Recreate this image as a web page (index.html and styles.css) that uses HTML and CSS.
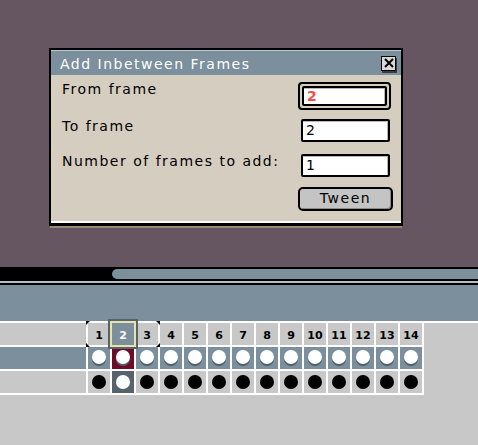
FILE: index.html
```html
<!DOCTYPE html>
<html>
<head>
<meta charset="utf-8">
<link rel="stylesheet" href="styles.css">
</head>
<body>
<div class="desk">
  <div class="win">
    <div class="titlebar">
      <span class="title">Add Inbetween Frames</span>
      <span class="close"><svg width="12" height="12" viewBox="0 0 12 12"><path d="M2 2L10 10M10 2L2 10" stroke="#000" stroke-width="2" fill="none"/></svg></span>
    </div>
    <div class="body">
      <div class="row r1"><span class="lbl">From frame</span><span class="focus"><span class="field"><span class="sel">2</span></span></span></div>
      <div class="row r2"><span class="lbl">To frame</span><span class="field">2</span></div>
      <div class="row r3"><span class="lbl">Number of frames to add:</span><span class="field">1</span></div>
      <div class="btnrow"><span class="btn">Tween</span></div>
    </div>
  </div>
</div>
<div class="scroll"><div class="thumb"></div></div>
<div class="sep"></div>
<div class="toolbar"></div>
<div class="tl">
  <div class="grid">
    <div class="hd lab"></div>
    <div class="hd c"><span class="mk tl-mk"></span><span class="mk bl-mk"></span>1</div>
    <div class="hd c cur">2</div>
    <div class="hd c"><span class="mk tr-mk"></span><span class="mk br-mk"></span>3</div>
    <div class="hd c">4</div><div class="hd c">5</div><div class="hd c">6</div><div class="hd c">7</div>
    <div class="hd c">8</div><div class="hd c">9</div><div class="hd c">10</div><div class="hd c">11</div>
    <div class="hd c">12</div><div class="hd c">13</div><div class="hd c">14</div>

    <div class="ra lab"></div>
    <div class="ra c"><i class="dw"></i></div>
    <div class="ra c sel-a"><i class="dw"></i></div>
    <div class="ra c"><i class="dw"></i></div><div class="ra c"><i class="dw"></i></div>
    <div class="ra c"><i class="dw"></i></div><div class="ra c"><i class="dw"></i></div>
    <div class="ra c"><i class="dw"></i></div><div class="ra c"><i class="dw"></i></div>
    <div class="ra c"><i class="dw"></i></div><div class="ra c"><i class="dw"></i></div>
    <div class="ra c"><i class="dw"></i></div><div class="ra c"><i class="dw"></i></div>
    <div class="ra c"><i class="dw"></i></div><div class="ra c"><i class="dw"></i></div>

    <div class="rb lab"></div>
    <div class="rb c"><i class="db"></i></div>
    <div class="rb c sel-b"><i class="dw2"></i></div>
    <div class="rb c"><i class="db"></i></div><div class="rb c"><i class="db"></i></div>
    <div class="rb c"><i class="db"></i></div><div class="rb c"><i class="db"></i></div>
    <div class="rb c"><i class="db"></i></div><div class="rb c"><i class="db"></i></div>
    <div class="rb c"><i class="db"></i></div><div class="rb c"><i class="db"></i></div>
    <div class="rb c"><i class="db"></i></div><div class="rb c"><i class="db"></i></div>
    <div class="rb c"><i class="db"></i></div><div class="rb c"><i class="db"></i></div>
  </div>
</div>
</body>
</html>
```
FILE: styles.css
```css
html, body { margin: 0; padding: 0; }
body { width: 478px; height: 445px; overflow: hidden; background: #c8c8c8;
  font-family: "DejaVu Sans", sans-serif; }

.desk { height: 267px; background: #665662; box-sizing: border-box; padding: 48px 0 0 49px; }

.win { width: 354px; height: 178px; box-sizing: border-box; border: 2px solid #000;
  border-bottom-width: 3px;
  background: #d4cdc0; display: flex; flex-direction: column;
  box-shadow: 0 3px 0 -1px #9c8878; }

.titlebar { height: 25px; box-sizing: border-box; background: #7b8f9c;
  border-top: 1px solid #b9cad6; display: flex; align-items: center;
  justify-content: space-between; padding: 0 5px 0 9px; }
.title { color: #fff; font-size: 14px; letter-spacing: 1.5px; line-height: 16px; margin-top: 1px; }
.close { width: 15px; height: 15px; box-sizing: border-box; border: 1px solid #000;
  background: #d8d8d8; display: flex; align-items: center; justify-content: center;
  box-shadow: 1px 2px 0 #3c3c3c; }

.body { flex: 1; padding: 7px 11px 0 11px; border-bottom: 2px solid #fff; }
.row { display: flex; justify-content: space-between; align-items: flex-start; }
.lbl { font-size: 14px; letter-spacing: 1.5px; line-height: 16px; color: #000; margin-top: -1px; }
.r1 { height: 28px; }
.r2 { margin-top: 9px; }
.r3 { margin-top: 12px; }

.focus { display: flex; width: 93px; height: 28px; box-sizing: border-box; border: 2px solid #000;
  border-radius: 4px; padding: 2px; margin-right: -1px; }
.focus .field { width: 85px; height: 20px; line-height: 16px; }
.field { display: block; width: 89px; height: 23px; box-sizing: border-box; border: 2px solid #000;
  border-radius: 2px; background: #fff; font-size: 14px; line-height: 18px;
  padding-left: 3px; box-shadow: inset 0 1px 0 #b8b8b8, inset -1px 0 0 #b8b8b8; }
.sel { color: #f04a4a; font-weight: bold; }

.btnrow { display: flex; justify-content: flex-end; margin-top: 10px; }
.btn { width: 95px; height: 24px; box-sizing: border-box; border: 2px solid #000;
  border-radius: 5px; background: #c4c4c4; text-align: center; font-size: 14px;
  letter-spacing: 1.5px; line-height: 19px; margin-right: -3px;
  box-shadow: inset -1px -1px 0 #8a8a8a; }

.scroll { height: 14px; background: #000; padding-top: 2px; box-sizing: border-box; }
.thumb { margin-left: 112px; height: 10px; background: #7b8f9c; border-radius: 5px 0 0 5px; }
.sep { height: 2px; background: #b4c0c8; border-bottom: 2px solid #000; }
.toolbar { height: 36px; background: #7b8f9c; border-bottom: 2px solid #fff; }

.tl { height: 122px; background: #c8c8c8; }
.grid { display: grid; width: 424px; box-sizing: border-box;
  grid-template-columns: 86px repeat(14, 22px); grid-template-rows: 22px 22px 22px;
  gap: 2px; padding: 0 2px 2px 0; background: #fff; }
.hd { background: #c8c8c8; }
.ra { background: #7b8f9c; }
.rb { background: #c8c8c8; }
.c { position: relative; display: flex; align-items: center; justify-content: center; }
.hd.c { font-size: 11px; font-weight: bold; color: #000; padding-top: 2px; box-sizing: border-box; }
.hd.cur { background: #7b8f9c; color: #fff; z-index: 1;
  box-shadow: 0 0 0 2px #e4e4ac, 0 0 0 4px #56626c; }
.mk { position: absolute; width: 0; height: 0; border: 2px solid transparent; }
.tl-mk { left: -2px; top: -2px; border-top-color: #000; border-left-color: #000; }
.bl-mk { left: -2px; bottom: -2px; border-bottom-color: #000; border-left-color: #000; }
.tr-mk { right: -2px; top: -2px; border-top-color: #000; border-right-color: #000; }
.br-mk { right: -2px; bottom: -2px; border-bottom-color: #000; border-right-color: #000; }

.dw { width: 14px; height: 14px; border-radius: 50%; background: #fff;
  box-shadow: 0 2px 0 #4e5e6a; margin-top: -2px; }
.dw2 { width: 14px; height: 14px; border-radius: 50%; background: #fff; }
.db { width: 14px; height: 14px; border-radius: 50%; background: #000; }
.sel-a { background: #6e0b26; }
.sel-b { background: #56626c; }
```
